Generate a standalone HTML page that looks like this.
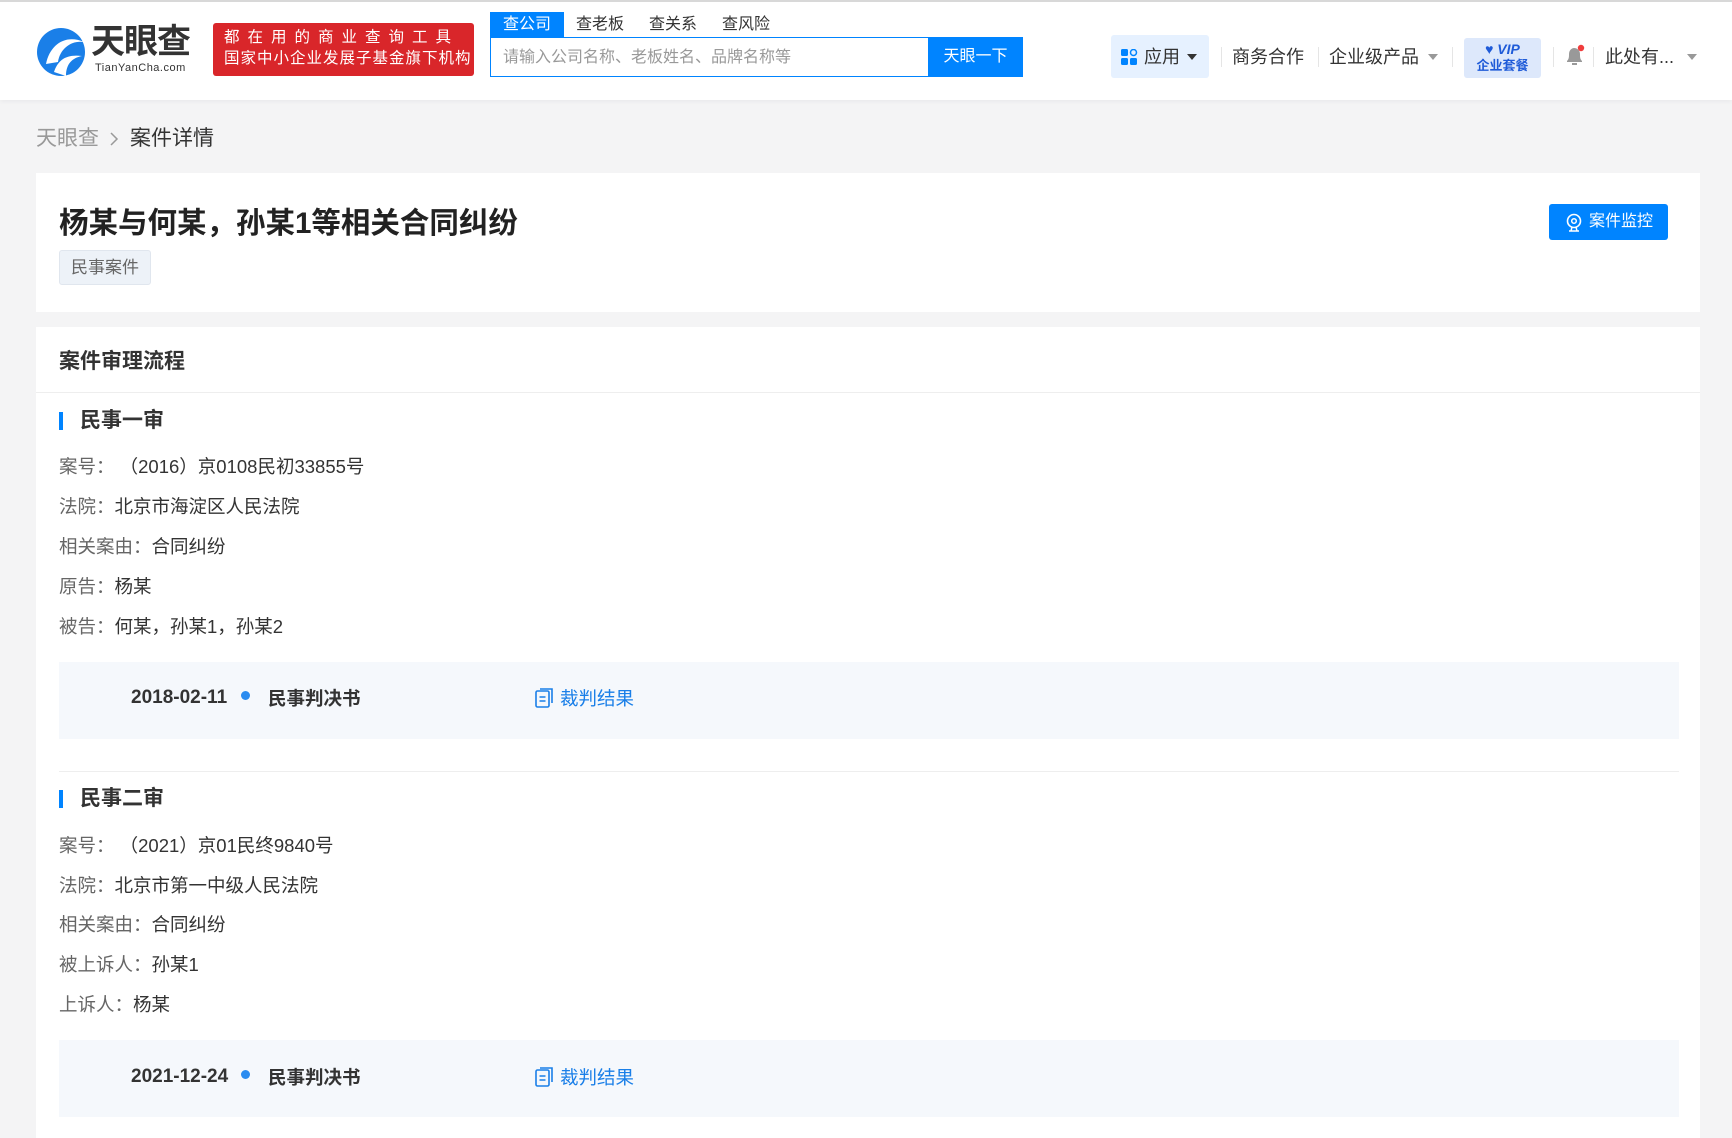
<!DOCTYPE html>
<html><head><meta charset="utf-8"><style>
*{margin:0;padding:0;box-sizing:border-box}
body{width:1732px;height:1138px;overflow:hidden;background:#f4f4f5;font-family:"Liberation Sans","Noto Sans CJK SC",sans-serif;color:#333;position:relative}
.a{position:absolute;white-space:nowrap}
.hdr{position:absolute;left:0;top:0;width:1732px;height:100px;background:#fff;border-top:2px solid #d8d8d8;box-shadow:0 2px 4px rgba(0,0,0,.04)}
.card{position:absolute;left:36px;width:1664px;background:#fff}
.lbl{font-size:18.5px;color:#666;left:59px}
.lbl b{font-weight:normal;color:#333}
.box{position:absolute;left:59px;width:1620px;height:77px;background:#f5f8fc}
</style></head><body>
<div class="hdr">
 <svg class="a" style="left:36px;top:24px" width="50" height="52" viewBox="0 0 50 52">
  <circle cx="25" cy="26" r="24" fill="#1a7fe8"/>
  <path d="M10 38 C 14 18, 30 8, 48 16 C 36 14, 24 22, 22 36 Z" fill="#fff"/>
  <path d="M18 46 C 22 34, 30 28, 46 30 C 36 32, 30 38, 30 50 Z" fill="#fff"/>
 </svg>
 <div class="a" style="left:91px;top:20px;font-size:34px;line-height:40px;font-weight:bold;color:#333;letter-spacing:-1px">天眼查</div>
 <div class="a" style="left:95px;top:60px;font-size:11px;line-height:13px;color:#333;letter-spacing:.5px">TianYanCha.com</div>
 <div class="a" style="left:213px;top:21px;width:261px;height:53px;background:#d9262a;border-radius:3px;color:#fff;font-size:15.5px;line-height:21px;padding:4px 0 0 11px">
  <div style="letter-spacing:8px">都在用的商业查询工具</div><div style="letter-spacing:1px">国家中小企业发展子基金旗下机构</div></div>
 <div class="a" style="left:490px;top:10px;width:74px;height:25px;background:#0084ff;color:#fff;font-size:16px;text-align:center;line-height:25px">查公司</div>
 <div class="a" style="left:576px;top:12px;font-size:16px;line-height:22px;color:#333">查老板</div>
 <div class="a" style="left:649px;top:12px;font-size:16px;line-height:22px;color:#333">查关系</div>
 <div class="a" style="left:722px;top:12px;font-size:16px;line-height:22px;color:#333">查风险</div>
 <div class="a" style="left:490px;top:35px;width:439px;height:40px;border:1px solid #0084ff;border-right:none;padding:0 12px;line-height:40px;font-size:16px;color:#999">请输入公司名称、老板姓名、品牌名称等</div>
 <div class="a" style="left:928px;top:35px;width:95px;height:40px;background:#0084ff;color:#fff;font-size:16px;text-align:center;line-height:40px">天眼一下</div>
 <div class="a" style="left:1111px;top:33px;width:98px;height:43px;background:#e6f1ff;border-radius:3px"></div>
 <svg class="a" style="left:1121px;top:47px" width="17" height="17"><rect x="0" y="0" width="7" height="7" rx="1.5" fill="#0084ff"/><circle cx="12.5" cy="3.5" r="3" fill="none" stroke="#0084ff" stroke-width="1.5"/><rect x="0" y="9" width="7" height="7" rx="1.5" fill="#0084ff"/><rect x="9" y="9" width="7" height="7" rx="1.5" fill="#0084ff"/></svg>
 <div class="a" style="left:1144px;top:43px;font-size:18px;line-height:24px;color:#333">应用</div>
 <div class="a" style="left:1187px;top:52px;border:5px solid transparent;border-top:6px solid #333"></div>
 <div class="a" style="left:1221px;top:45px;width:1px;height:20px;background:#e5e5e5"></div>
 <div class="a" style="left:1232px;top:43px;font-size:18px;line-height:24px;color:#333">商务合作</div>
 <div class="a" style="left:1318px;top:45px;width:1px;height:20px;background:#e5e5e5"></div>
 <div class="a" style="left:1329px;top:43px;font-size:18px;line-height:24px;color:#333">企业级产品</div>
 <div class="a" style="left:1428px;top:52px;border:5px solid transparent;border-top:6px solid #999"></div>
 <div class="a" style="left:1452px;top:45px;width:1px;height:20px;background:#e5e5e5"></div>
 <div class="a" style="left:1464px;top:36px;width:77px;height:40px;background:#dde8fb;border-radius:3px;color:#1f5bd8;text-align:center;font-weight:bold;font-style:italic">
  <div style="font-size:14px;line-height:17px;margin-top:3px">♥ VIP</div><div style="font-size:13px;line-height:16px;font-style:normal">企业套餐</div></div>
 <div class="a" style="left:1553px;top:45px;width:1px;height:20px;background:#e5e5e5"></div>
 <svg class="a" style="left:1564px;top:42px" width="22" height="24"><path d="M3 18 L3 17 C5 15 5 13 5 10 C5 6 8 4 10 4 C13 4 16 6 16 10 C16 13 16 15 18 17 L18 18 Z" fill="#999"/><rect x="8" y="19" width="5" height="2" fill="#999"/><circle cx="17" cy="4" r="3.2" fill="#f03c3c"/></svg>
 <div class="a" style="left:1593px;top:45px;width:1px;height:20px;background:#e5e5e5"></div>
 <div class="a" style="left:1605px;top:43px;font-size:18px;line-height:24px;color:#333">此处有...</div>
 <div class="a" style="left:1687px;top:52px;border:5px solid transparent;border-top:6px solid #999"></div>
</div>
<div class="a" style="left:36px;top:126px;font-size:21px;line-height:26px;color:#999">天眼查</div>
<svg class="a" style="left:109px;top:132px" width="10" height="14"><path d="M2 1 L8 7 L2 13" fill="none" stroke="#999" stroke-width="1.5"/></svg>
<div class="a" style="left:130px;top:126px;font-size:21px;line-height:26px;color:#333">案件详情</div>
<div class="card" style="top:173px;height:139px">
 <div class="a" style="left:23px;top:32px;font-size:29.5px;line-height:38px;font-weight:bold;color:#222">杨某与何某，孙某1等相关合同纠纷</div>
 <div class="a" style="left:23px;top:77px;width:92px;height:35px;background:#edf2f8;border:1px solid #e0e6ee;border-radius:3px;font-size:17px;color:#666;text-align:center;line-height:33px">民事案件</div>
 <div class="a" style="left:1513px;top:31px;width:119px;height:36px;background:#0084ff;border-radius:3px;color:#fff;font-size:16px;line-height:36px;padding-left:40px">案件监控</div>
 <svg class="a" style="left:1529px;top:40px" width="18" height="19"><circle cx="9" cy="8" r="6.5" fill="none" stroke="#fff" stroke-width="1.6"/><circle cx="9" cy="8" r="2.3" fill="none" stroke="#fff" stroke-width="1.5"/><path d="M4 18 H14 M7 14 L6 18 M11 14 L12 18" stroke="#fff" stroke-width="1.5"/></svg>
</div>
<div class="card" style="top:327px;height:811px">
 <div class="a" style="left:23px;top:21px;font-size:21px;line-height:28px;font-weight:bold;color:#333">案件审理流程</div>
 <div class="a" style="left:0;top:65px;width:1664px;height:1px;background:#eee"></div>
</div>
<!-- section 1 -->
<div class="a" style="left:59px;top:412px;width:4px;height:18px;background:#0084ff"></div>
<div class="a" style="left:80px;top:407px;font-size:21px;line-height:28px;font-weight:bold;color:#333">民事一审</div>
<div class="a lbl" style="top:453px">案号： <b>（2016）京0108民初33855号</b></div>
<div class="a lbl" style="top:493px">法院：<b>北京市海淀区人民法院</b></div>
<div class="a lbl" style="top:533px">相关案由：<b>合同纠纷</b></div>
<div class="a lbl" style="top:573px">原告：<b>杨某</b></div>
<div class="a lbl" style="top:613px">被告：<b>何某，孙某1，孙某2</b></div>
<div class="box" style="top:662px"></div>
<div class="a" style="left:131px;top:687px;font-size:19px;font-weight:bold;color:#333">2018-02-11</div>
<div class="a" style="left:241px;top:691px;width:9px;height:9px;border-radius:50%;background:#2a8cf0"></div>
<div class="a" style="left:268px;top:685px;font-size:18.5px;font-weight:bold;color:#333">民事判决书</div>
<svg class="a" style="left:535px;top:688px" width="19" height="20"><rect x="1" y="3" width="13" height="16" rx="1.5" fill="none" stroke="#1a7fe8" stroke-width="1.6"/><path d="M5 1 H17 V15" fill="none" stroke="#1a7fe8" stroke-width="1.6"/><path d="M4.5 9 H10.5 M4.5 13 H10.5" stroke="#1a7fe8" stroke-width="1.5"/></svg>
<div class="a" style="left:560px;top:685px;font-size:18.5px;color:#1a7fe8">裁判结果</div>
<div class="a" style="left:59px;top:771px;width:1620px;height:1px;background:#eee"></div>
<!-- section 2 -->
<div class="a" style="left:59px;top:790px;width:4px;height:18px;background:#0084ff"></div>
<div class="a" style="left:80px;top:785px;font-size:21px;line-height:28px;font-weight:bold;color:#333">民事二审</div>
<div class="a lbl" style="top:832px">案号： <b>（2021）京01民终9840号</b></div>
<div class="a lbl" style="top:872px">法院：<b>北京市第一中级人民法院</b></div>
<div class="a lbl" style="top:911px">相关案由：<b>合同纠纷</b></div>
<div class="a lbl" style="top:951px">被上诉人：<b>孙某1</b></div>
<div class="a lbl" style="top:991px">上诉人：<b>杨某</b></div>
<div class="box" style="top:1040px"></div>
<div class="a" style="left:131px;top:1066px;font-size:19px;font-weight:bold;color:#333">2021-12-24</div>
<div class="a" style="left:241px;top:1070px;width:9px;height:9px;border-radius:50%;background:#2a8cf0"></div>
<div class="a" style="left:268px;top:1064px;font-size:18.5px;font-weight:bold;color:#333">民事判决书</div>
<svg class="a" style="left:535px;top:1067px" width="19" height="20"><rect x="1" y="3" width="13" height="16" rx="1.5" fill="none" stroke="#1a7fe8" stroke-width="1.6"/><path d="M5 1 H17 V15" fill="none" stroke="#1a7fe8" stroke-width="1.6"/><path d="M4.5 9 H10.5 M4.5 13 H10.5" stroke="#1a7fe8" stroke-width="1.5"/></svg>
<div class="a" style="left:560px;top:1064px;font-size:18.5px;color:#1a7fe8">裁判结果</div>
</body></html>
